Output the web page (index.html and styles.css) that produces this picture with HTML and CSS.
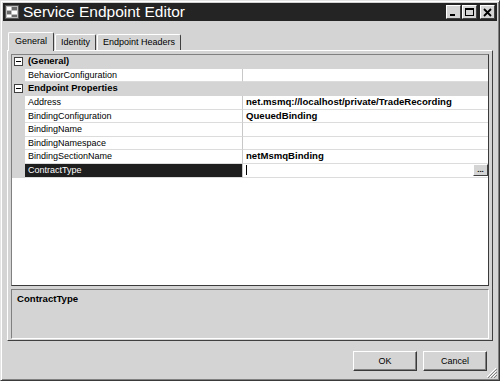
FILE: index.html
```html
<!DOCTYPE html>
<html lang="en">
<head>
  <meta charset="UTF-8">
  <title>Service Endpoint Editor</title>
  <link rel="stylesheet" href="styles.css">
</head>
<body>

  <div class="window">
    <div class="titlebar">
      <svg class="app-icon" width="14" height="14" viewBox="0 0 14 14">
        <rect x="0.5" y="0.5" width="13" height="13" fill="#bdbdbd" stroke="#555"/>
        <rect x="2" y="2" width="4" height="3" fill="#fff"/>
        <rect x="2" y="6" width="4" height="3" fill="#6a6a6a"/>
        <rect x="2" y="10" width="4" height="2" fill="#fff"/>
        <rect x="7" y="2" width="5" height="3" fill="#6a6a6a"/>
        <rect x="7" y="6" width="5" height="3" fill="#fff"/>
        <rect x="7" y="10" width="5" height="2" fill="#6a6a6a"/>
      </svg>
      <span class="title">Service Endpoint Editor</span>
      <div class="controls">
        <span class="ctrl">
          <svg width="9" height="9" viewBox="0 0 9 9"><rect x="1" y="6" width="5" height="2" fill="#000"/></svg>
        </span>
        <span class="ctrl">
          <svg width="9" height="9" viewBox="0 0 9 9"><rect x="0.5" y="0.5" width="8" height="7" fill="none" stroke="#000"/><rect x="0" y="0" width="9" height="2" fill="#000"/></svg>
        </span>
        <span class="ctrl close">
          <svg width="9" height="9" viewBox="0 0 9 9"><path d="M1 1 L8 8 M8 1 L1 8" stroke="#000" stroke-width="1.8"/></svg>
        </span>
      </div>
    </div>

    <div class="tabs">
      <div class="tab active">General</div>
      <div class="tab">Identity</div>
      <div class="tab">Endpoint Headers</div>
    </div>

    <div class="panel">
      <div class="grid">
        <div class="row cat">
          <span class="margin"><span class="toggle"></span></span>
          <span class="cat-label">(General)</span>
        </div>
        <div class="row">
          <span class="margin"></span>
          <span class="name">BehaviorConfiguration</span>
          <span class="value"></span>
        </div>
        <div class="row cat">
          <span class="margin"><span class="toggle"></span></span>
          <span class="cat-label">Endpoint Properties</span>
        </div>
        <div class="row">
          <span class="margin"></span>
          <span class="name">Address</span>
          <span class="value">net.msmq://localhost/private/TradeRecording</span>
        </div>
        <div class="row">
          <span class="margin"></span>
          <span class="name">BindingConfiguration</span>
          <span class="value">QueuedBinding</span>
        </div>
        <div class="row">
          <span class="margin"></span>
          <span class="name">BindingName</span>
          <span class="value"></span>
        </div>
        <div class="row">
          <span class="margin"></span>
          <span class="name">BindingNamespace</span>
          <span class="value"></span>
        </div>
        <div class="row">
          <span class="margin"></span>
          <span class="name">BindingSectionName</span>
          <span class="value">netMsmqBinding</span>
        </div>
        <div class="row selected">
          <span class="margin"></span>
          <span class="name">ContractType</span>
          <span class="value editing">
            <span class="caret"></span>
            <span class="ellipsis">...</span>
          </span>
        </div>
      </div>
      <div class="desc">ContractType</div>
    </div>

    <div class="footer">
      <button class="btn">OK</button>
      <button class="btn">Cancel</button>
    </div>

    <svg class="grip" width="11" height="11" viewBox="0 0 11 11">
      <path d="M10 1 L1 10 M10 4 L4 10 M10 7 L7 10" stroke="#fff" stroke-width="1"/>
      <path d="M11 2 L2 11 M11 5 L5 11 M11 8 L8 11" stroke="#808080" stroke-width="1"/>
    </svg>
  </div>

</body>
</html>
```

FILE: styles.css
```css
* {
  box-sizing: border-box;
}

body {
  margin: 0;
  font-family: "Liberation Sans", Arial, sans-serif;
  font-size: 9px;
  color: #000;
  background-color: #d4d4d4;
}

.window {
  position: relative;
  width: 500px;
  height: 381px;
  padding: 2px;
  display: flex;
  flex-direction: column;
  background-color: #d4d4d4;
  border: 1px solid;
  border-color: #e4e4e4 #3a3a3a #3a3a3a #e4e4e4;
  box-shadow: inset 1px 1px #ffffff, inset -1px -1px #808080;
}

/* title bar */
.titlebar {
  height: 18px;
  display: flex;
  align-items: center;
  padding: 0 2px 0 2px;
  background-color: #242424;
}

.app-icon {
  flex: none;
}

.title {
  margin-left: 4px;
  color: #fff;
  font-size: 15.5px;
  line-height: 18px;
}

.controls {
  margin-left: auto;
  display: flex;
  gap: 1px;
}

.ctrl {
  width: 15px;
  height: 14px;
  display: flex;
  align-items: center;
  justify-content: center;
  background-color: #d4d4d4;
  border: 1px solid;
  border-color: #fff #404040 #404040 #fff;
}

.ctrl.close {
  margin-left: 2px;
}

/* tabs */
.tabs {
  height: 29px;
  display: flex;
  align-items: flex-end;
  padding-left: 5px;
  position: relative;
  z-index: 1;
}

.tab {
  height: 16px;
  padding: 0 5px;
  line-height: 14px;
  border: 1px solid;
  border-bottom: none;
  border-color: #fff #404040 #fff #fff;
  border-radius: 2px 2px 0 0;
  background-color: #d4d4d4;
  margin-right: 1px;
}

.tab.active {
  height: 19px;
  margin-bottom: -1px;
  padding: 0 6px;
  line-height: 16px;
}

/* tab page */
.panel {
  height: 291px;
  margin: 0 4px;
  padding: 3px 3px 1px 3px;
  display: flex;
  flex-direction: column;
  gap: 3px;
  border: 1px solid;
  border-color: #fff #404040 #404040 #fff;
}

.grid {
  flex: 1;
  background-color: #fff;
  border: 1px solid;
  border-color: #808080 #3a3a3a #3a3a3a #808080;
}

.row {
  height: 13.65px;
  display: grid;
  grid-template-columns: 13px 218px 1fr;
  line-height: 12.5px;
}

.margin {
  background-color: #d4d4d4;
  position: relative;
}

.name,
.value {
  border-bottom: 1px solid #dcdcdc;
  white-space: nowrap;
  overflow: hidden;
}

.name {
  padding-left: 3px;
  border-right: 1px solid #c8c8c8;
}

.value {
  padding-left: 3px;
  font-weight: bold;
  font-size: 9.6px;
}

.row.cat {
  background-color: #d4d4d4;
}

.cat-label {
  grid-column: 2 / 4;
  padding-left: 3px;
  font-weight: bold;
  font-size: 9.4px;
}

.toggle {
  position: absolute;
  left: 2px;
  top: 2px;
  width: 9px;
  height: 9px;
  border: 1px solid #404040;
  background-color: #fff;
}

.toggle::after {
  content: "";
  position: absolute;
  left: 1px;
  top: 3px;
  width: 5px;
  height: 1px;
  background-color: #000;
}

.row.selected .name {
  background-color: #1e1e1e;
  color: #fff;
}

.value.editing {
  display: flex;
  align-items: center;
  justify-content: space-between;
  padding-right: 0;
}

.caret {
  width: 1px;
  height: 10px;
  background-color: #000;
}

.ellipsis {
  width: 15px;
  height: 12px;
  line-height: 10px;
  text-align: center;
  font-size: 8px;
  background-color: #d4d4d4;
  border: 1px solid;
  border-color: #fff #404040 #404040 #fff;
}

.desc {
  height: 50px;
  padding: 3px 5px;
  font-weight: bold;
  font-size: 9.6px;
  border: 1px solid;
  border-color: #808080 #fff #fff #808080;
}

/* buttons */
.footer {
  display: flex;
  justify-content: flex-end;
  gap: 6px;
  padding: 10px 10px 0 0;
}

.btn {
  width: 64px;
  height: 20px;
  font-family: "Liberation Sans", Arial, sans-serif;
  font-size: 9px;
  color: #000;
  background-color: #d4d4d4;
  border: 1px solid;
  border-color: #fff #3a3a3a #3a3a3a #fff;
  box-shadow: inset -1px -1px #808080;
}

.grip {
  position: absolute;
  right: 2px;
  bottom: 2px;
}
```
